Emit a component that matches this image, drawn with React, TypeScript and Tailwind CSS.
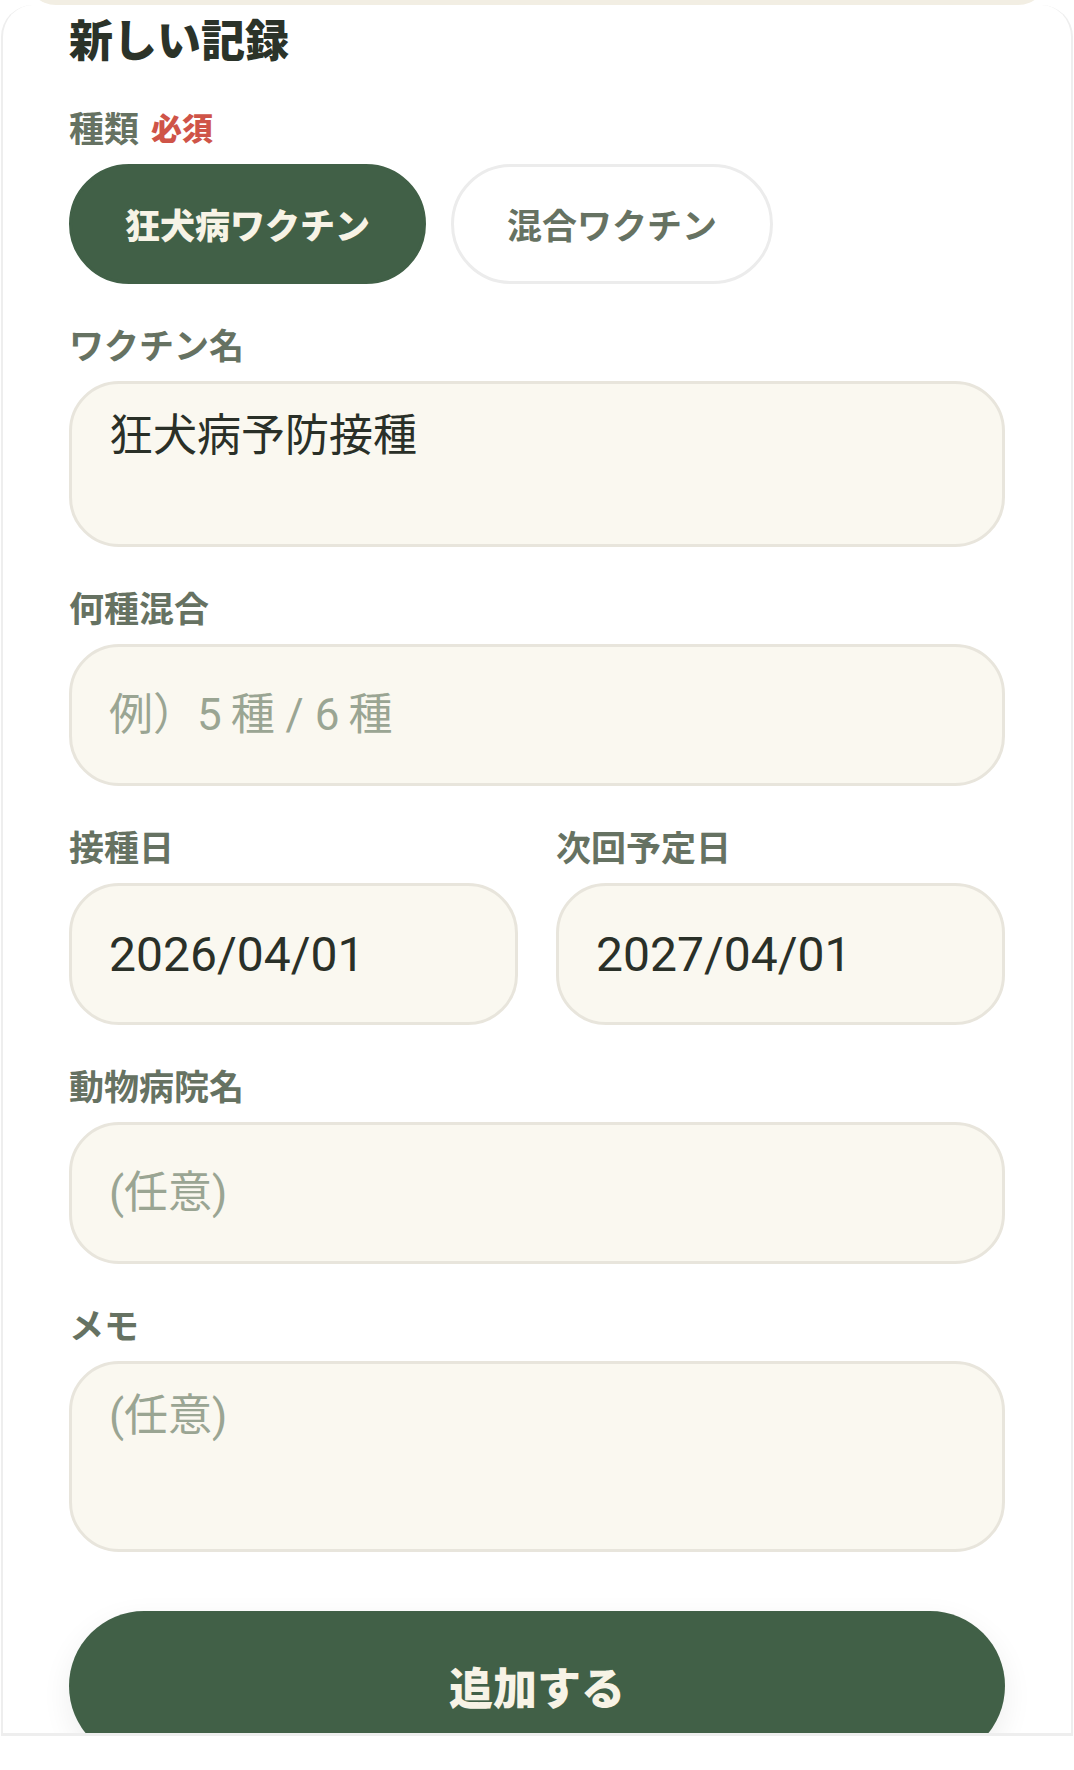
import { useState } from "react";

type Kind = "rabies" | "combo";

function FieldLabel({
  children,
  required,
}: {
  children: React.ReactNode;
  required?: boolean;
}) {
  return (
    <label className="mb-[11px] flex h-[52px] items-center text-[35px] leading-[52px] font-bold text-[#667262]">
      {children}
      {required && (
        <span className="ml-[12px] text-[31px] font-black text-[#cf5448]">
          必須
        </span>
      )}
    </label>
  );
}

const inputClass =
  "block w-full rounded-[50px] border-[3px] border-[#e8e5dc] bg-[#faf8f0] px-[37px] font-['Roboto','Noto_Sans_CJK_JP',sans-serif] text-[44px] leading-[1.5] text-[#2a3028] outline-none placeholder:text-[#9aa593]";

const chipOn =
  "h-[120px] rounded-full border-[3px] border-[#416047] bg-[#416047] px-[53px] text-[35px] font-black text-[#f7f3e6]";
const chipOff =
  "h-[120px] rounded-full border-[3px] border-[#ececec] bg-white px-[53px] text-[35px] font-bold text-[#667262]";

export default function App() {
  const [kind, setKind] = useState<Kind>("rabies");

  return (
    <div className="min-h-screen bg-white font-['Noto_Sans_CJK_JP','Noto_Sans',sans-serif]">
      {/* bottom edge of the sheet above */}
      <div className="mx-[26px] h-[5px] overflow-hidden">
        <div className="-mt-[35px] h-[40px] rounded-b-[30px] bg-[#f2eee3]" />
      </div>

      <div className="mx-[1px] h-[1731px] overflow-hidden rounded-t-[32px] border-x-2 border-b-[3px] border-[#eeeeee] bg-white px-[66px]">
        <h2 className="text-[44px] leading-[66px] font-black text-[#2b3329]">
          新しい記録
        </h2>

        <div className="mt-[30px] flex flex-col gap-[34px]">
          <div>
            <FieldLabel required>種類</FieldLabel>
            <div className="flex gap-[25px]">
              <button
                onClick={() => setKind("rabies")}
                className={kind === "rabies" ? chipOn : chipOff}
              >
                狂犬病ワクチン
              </button>
              <button
                onClick={() => setKind("combo")}
                className={kind === "combo" ? chipOn : chipOff}
              >
                混合ワクチン
              </button>
            </div>
          </div>

          <div>
            <FieldLabel>ワクチン名</FieldLabel>
            <textarea
              className={`${inputClass} h-[166px] resize-none pt-[19px]`}
              defaultValue="狂犬病予防接種"
            />
          </div>

          <div>
            <FieldLabel>何種混合</FieldLabel>
            <input
              className={`${inputClass} h-[142px]`}
              placeholder={"例）5\u2009種 / 6\u2009種"}
            />
          </div>

          <div className="grid grid-cols-2 gap-x-[38px]">
            <div>
              <FieldLabel>接種日</FieldLabel>
              <input
                className={`${inputClass} h-[142px] text-[48px]`}
                defaultValue="2026/04/01"
              />
            </div>
            <div>
              <FieldLabel>次回予定日</FieldLabel>
              <input
                className={`${inputClass} h-[142px] text-[48px]`}
                defaultValue="2027/04/01"
              />
            </div>
          </div>

          <div>
            <FieldLabel>動物病院名</FieldLabel>
            <input className={`${inputClass} h-[142px]`} placeholder="(任意)" />
          </div>

          <div>
            <FieldLabel>メモ</FieldLabel>
            <textarea
              className={`${inputClass} h-[191px] resize-none pt-[19px]`}
              placeholder="(任意)"
            />
          </div>
        </div>

        <button className="mt-[59px] block h-[150px] w-full rounded-full bg-[#416047] text-[44px] font-black text-[#f7f3e6] shadow-[0_10px_30px_rgba(0,0,0,0.07)]">
          追加する
        </button>
      </div>
    </div>
  );
}
